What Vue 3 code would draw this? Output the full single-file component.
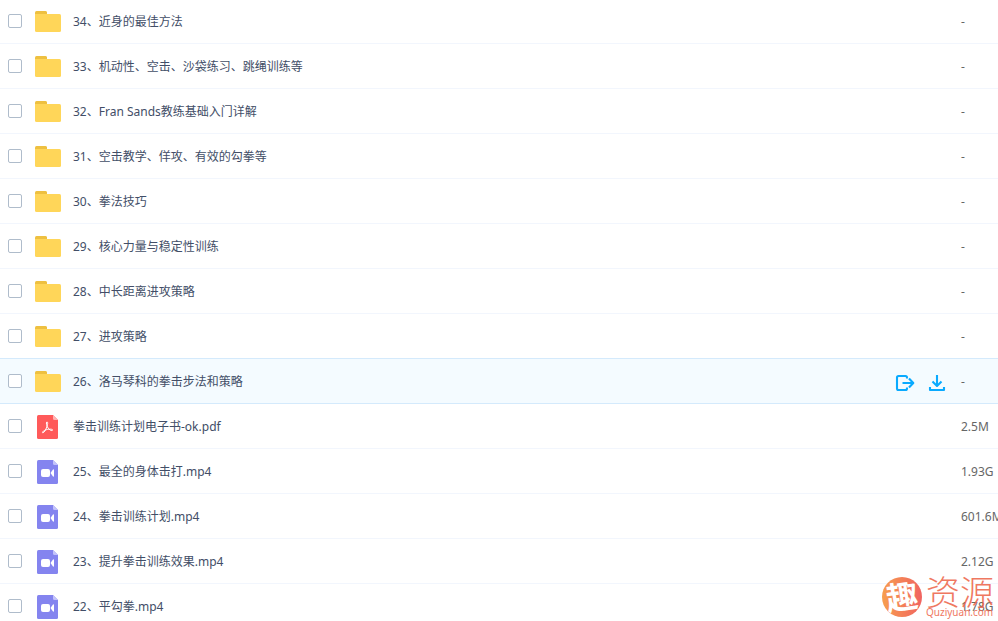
<script setup>
import { ref } from 'vue'

const files = ref([
  { name: '34、近身的最佳方法', type: 'folder', size: '-' },
  { name: '33、机动性、空击、沙袋练习、跳绳训练等', type: 'folder', size: '-' },
  { name: '32、Fran Sands教练基础入门详解', type: 'folder', size: '-' },
  { name: '31、空击教学、佯攻、有效的勾拳等', type: 'folder', size: '-' },
  { name: '30、拳法技巧', type: 'folder', size: '-' },
  { name: '29、核心力量与稳定性训练', type: 'folder', size: '-' },
  { name: '28、中长距离进攻策略', type: 'folder', size: '-' },
  { name: '27、进攻策略', type: 'folder', size: '-' },
  { name: '26、洛马琴科的拳击步法和策略', type: 'folder', size: '-', active: true },
  { name: '拳击训练计划电子书-ok.pdf', type: 'pdf', size: '2.5M' },
  { name: '25、最全的身体击打.mp4', type: 'video', size: '1.93G' },
  { name: '24、拳击训练计划.mp4', type: 'video', size: '601.6M' },
  { name: '23、提升拳击训练效果.mp4', type: 'video', size: '2.12G' },
  { name: '22、平勾拳.mp4', type: 'video', size: '1.78G' },
])
</script>

<template>
  <main class="page">
    <ul class="list">
      <li v-for="(file, i) in files" :key="file.name" class="row" :class="{ active: file.active }">
        <input :id="`file-${i}`" class="check" type="checkbox" />
        <span class="icon">
          <svg v-if="file.type === 'folder'" width="26" height="22" viewBox="0 -1 26 22">
            <path d="M0 5V1.500Q0 0 1.500 0H10.500Q11.500 0 12 1V6H0Z" fill="#eec041" />
            <path d="M0 3H24.500Q26 3 26 4.500V19.500Q26 21 24.500 21H1.500Q0 21 0 19.500Z" fill="#ffd659" />
          </svg>
          <svg v-else width="22" height="26" viewBox="0 0 22 26">
            <g transform="translate(0 2)">
              <path
                d="M1.500 0H16L21 5V22.500Q21 24 19.500 24H1.500Q0 24 0 22.500V1.500Q0 0 1.500 0Z"
                :fill="file.type === 'pdf' ? '#ff5a5a' : '#8484ef'"
              />
              <path
                d="M16 0L21 5H17.500Q16 5 16 3.500Z"
                :fill="file.type === 'pdf' ? '#ffb3b3' : '#c3c3fa'"
              />
              <path
                v-if="file.type === 'pdf'"
                d="M9.800 7C11.300 6.700 10.600 9.800 9.800 12C8.800 14.700 7.200 17.600 5.800 17.800C4.500 17.600 6.500 15.400 9.400 14.700C12.200 14 15.600 13.900 15.600 15C15.300 16.400 12.500 15 11.200 13.200C9.800 11.400 8.800 7.600 9.800 7Z"
                fill="none"
                stroke="#fff"
                stroke-width="1"
              />
              <template v-else>
                <rect x="4" y="9" width="9" height="8" rx="2" fill="#fff" />
                <path d="M13.500 13L16 9.500Q17 9 17 10V16Q17 17 16 16.500Z" fill="#fff" />
              </template>
            </g>
          </svg>
        </span>
        <label class="name" :for="`file-${i}`">{{ file.name }}</label>
        <span v-if="file.active" class="actions">
          <button type="button" aria-label="分享">
            <svg width="20" height="18" viewBox="0 0 20 18">
              <path
                d="M12 4.500V3.500Q12 2 10.500 2H3.500Q2 2 2 3.500V14.500Q2 16 3.500 16H10.500Q12 16 12 14.500V13.500M7.500 9H18M14 4.500L18.300 9L14 13.500"
                class="stroke"
              />
            </svg>
          </button>
          <button type="button" aria-label="下载">
            <svg width="18" height="18" viewBox="0 0 18 18">
              <path d="M9 1V11.500M4.500 7.500L9 12L13.500 7.500M2 13V16H16V13" class="stroke" />
            </svg>
          </button>
        </span>
        <span class="size">{{ file.size }}</span>
      </li>
    </ul>

    <div class="brand">
      <span class="badge"><span class="mark">趣</span></span>
      <span class="words">
        <span class="title">资源</span>
        <span class="site">Quziyuan.com</span>
      </span>
    </div>
  </main>
</template>

<style>
body {
  margin: 0;
  background: #fff;
}
</style>

<style scoped>
.page {
  position: relative;
  height: 100vh;
  overflow: hidden;
  font: 12px/18px "Noto Sans", "Noto Sans CJK SC", sans-serif;
  color: #424e67;
}
.list {
  margin: -1px 0 0;
  padding: 0;
  list-style: none;
}
.row {
  display: flex;
  align-items: center;
  box-sizing: border-box;
  height: 45px;
  padding-left: 8px;
  border-bottom: 1px solid #f2f6fd;
}
.row:has(+ .active) {
  border-bottom-color: #d4eafc;
}
.active {
  background: #f4fbff;
  border-bottom-color: #d4eafc;
}
.check {
  appearance: none;
  flex: none;
  box-sizing: border-box;
  width: 14px;
  height: 14px;
  margin: 0;
  border: 1px solid #afbccb;
  border-radius: 2px;
  background: #fff;
}
.check:checked {
  background: #09aaff;
}
.icon {
  display: flex;
  flex: none;
  justify-content: center;
  width: 26px;
  margin: 0 12px 0 13px;
}
.name {
  flex: 1;
  min-width: 0;
  padding-top: 2px;
  white-space: nowrap;
}
.actions {
  display: flex;
  gap: 13px;
  margin-right: 15px;
  padding-top: 3px;
}
.actions button {
  display: flex;
  padding: 0;
  border: 0;
  background: none;
  cursor: pointer;
}
.stroke {
  fill: none;
  stroke: #09aaff;
  stroke-width: 2.1;
  stroke-linejoin: round;
}
.size {
  flex: none;
  width: 37px;
  padding-top: 2px;
  color: #666;
  white-space: nowrap;
}
.brand {
  position: absolute;
  right: 4px;
  bottom: 3px;
  display: flex;
  align-items: center;
  gap: 4px;
  color: #ee6a50;
  opacity: 0.9;
  pointer-events: none;
}
.badge {
  display: grid;
  place-items: center;
  width: 40px;
  height: 40px;
  border-radius: 50%;
  background: linear-gradient(90deg, #f7943c, #ef5350);
}
.mark {
  color: #fff;
  font-size: 32px;
  font-weight: 700;
  line-height: 32px;
  transform: rotate(-8deg);
}
.words {
  display: flex;
  flex-direction: column;
}
.title {
  padding-top: 2px;
  font-size: 34px;
  font-weight: 300;
  line-height: 28px;
}
.site {
  font-size: 10px;
  line-height: 12px;
}
</style>
